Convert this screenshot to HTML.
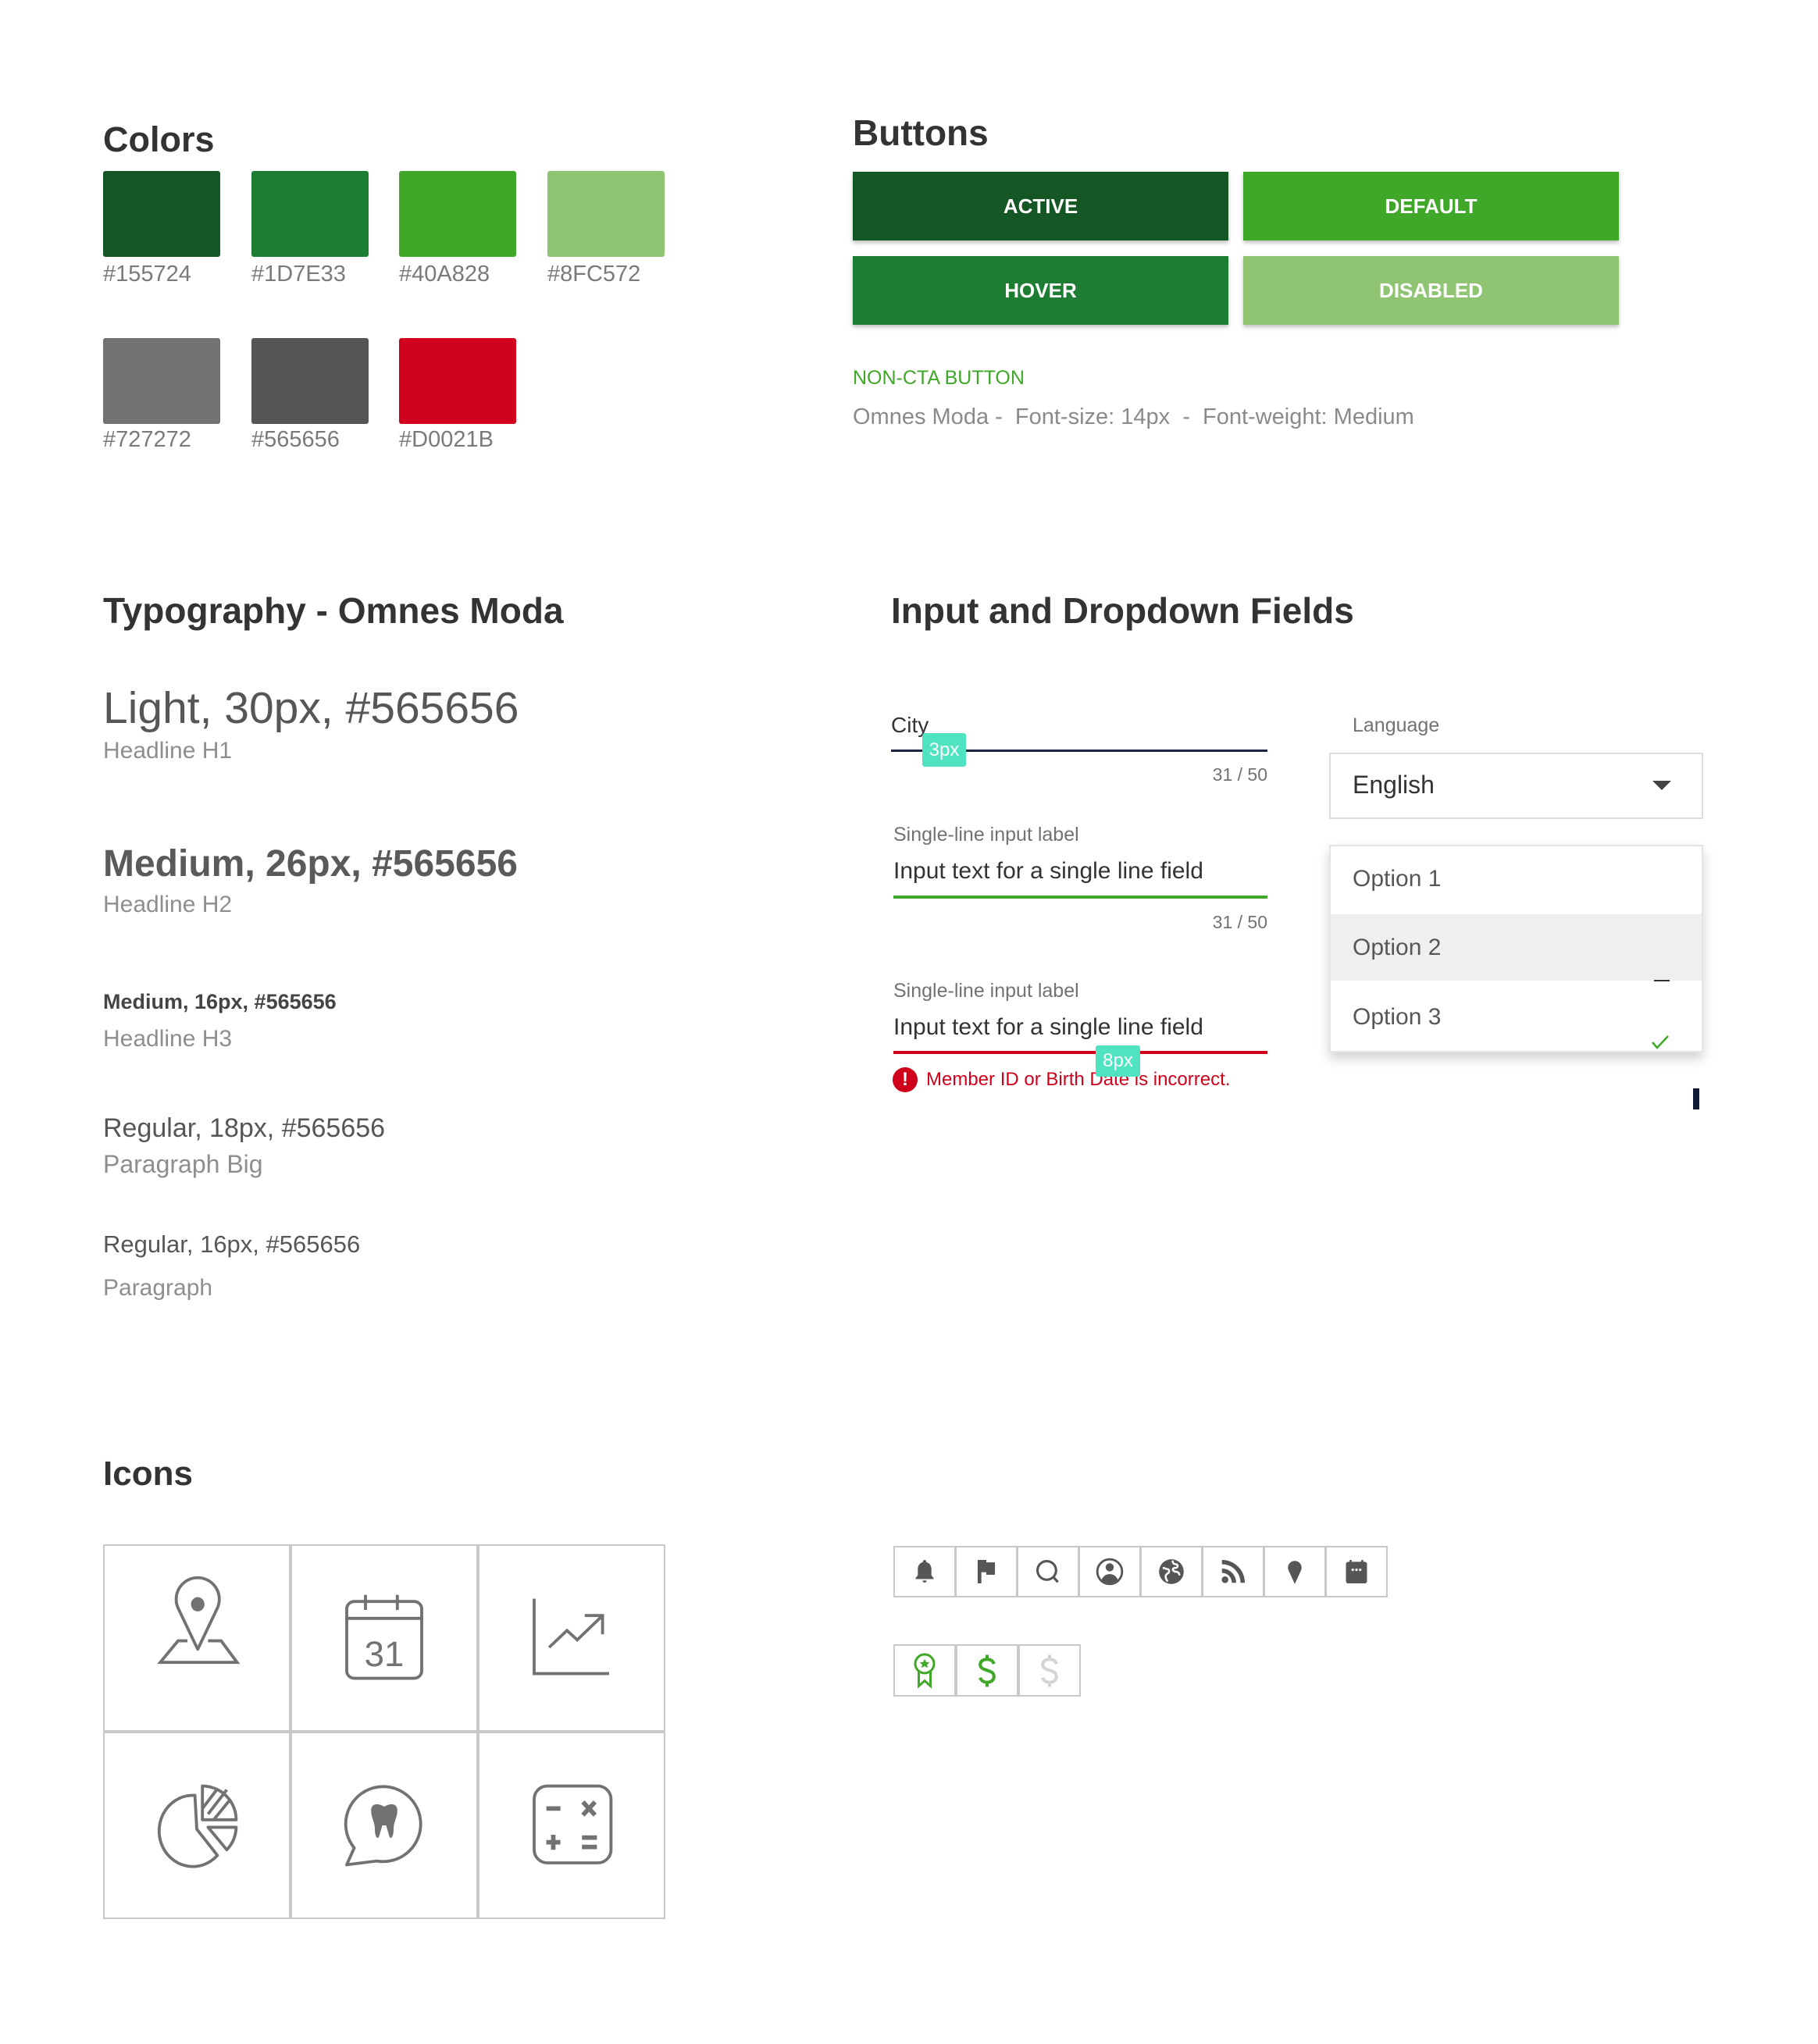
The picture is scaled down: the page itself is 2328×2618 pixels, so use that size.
<!DOCTYPE html>
<html><head><meta charset="utf-8">
<style>
*{margin:0;padding:0;box-sizing:border-box}
body{width:2328px;height:2618px;background:#fff;position:relative;overflow:hidden;font-family:"Liberation Sans",sans-serif;color:#565656}
.t{position:absolute;white-space:nowrap;line-height:1}
.h{font-weight:bold;color:#333;font-size:46px}
.sw{position:absolute;width:150px;height:110px;border-radius:3px}
.sl{font-size:29px;color:#7a7a7a}
.btn{position:absolute;width:481px;height:88px;color:#fff;font-weight:bold;font-size:26px;display:flex;align-items:center;justify-content:center;box-shadow:0 3px 5px rgba(0,0,0,.25)}
.cell{position:absolute;width:240px;height:240px;border:2px solid #c8c8c8}
.sc{position:absolute;width:80px;height:66px;border:2px solid #c8c8c8;display:flex;align-items:center;justify-content:center}
</style></head><body>

<div class="t h" style="left:132px;top:156px;font-size:45px">Colors</div>
<div class="sw" style="left:132px;top:219px;background:#155724"></div>
<div class="sw" style="left:322px;top:219px;background:#1D7E33"></div>
<div class="sw" style="left:511px;top:219px;background:#40A828"></div>
<div class="sw" style="left:701px;top:219px;background:#8FC572"></div>
<div class="t sl" style="left:132px;top:337px">#155724</div>
<div class="t sl" style="left:322px;top:337px">#1D7E33</div>
<div class="t sl" style="left:511px;top:337px">#40A828</div>
<div class="t sl" style="left:701px;top:337px">#8FC572</div>
<div class="sw" style="left:132px;top:433px;background:#727272"></div>
<div class="sw" style="left:322px;top:433px;background:#565656"></div>
<div class="sw" style="left:511px;top:433px;background:#D0021B"></div>
<div class="t sl" style="left:132px;top:549px">#727272</div>
<div class="t sl" style="left:322px;top:549px">#565656</div>
<div class="t sl" style="left:511px;top:549px">#D0021B</div>

<div class="t h" style="left:1092px;top:147px">Buttons</div>
<div class="btn" style="left:1092px;top:220px;background:#155724">ACTIVE</div>
<div class="btn" style="left:1592px;top:220px;background:#40A828">DEFAULT</div>
<div class="btn" style="left:1092px;top:328px;background:#1D7E33">HOVER</div>
<div class="btn" style="left:1592px;top:328px;background:#8FC572">DISABLED</div>
<div class="t" style="left:1092px;top:472px;font-size:25px;color:#40A828">NON-CTA BUTTON</div>
<div class="t" style="left:1092px;top:520px;font-size:29px;color:#8a8a8a">Omnes Moda -&nbsp; Font-size: 14px &nbsp;- &nbsp;Font-weight: Medium</div>

<div class="t h" style="left:132px;top:759px">Typography - Omnes Moda</div>
<div class="t" style="left:132px;top:879px;font-size:57px">Light, 30px, #565656</div>
<div class="t" style="left:132px;top:947px;font-size:30px;color:#8e8e8e">Headline H1</div>
<div class="t" style="left:132px;top:1083px;font-size:48px;font-weight:bold;color:#5a5a5a">Medium, 26px, #565656</div>
<div class="t" style="left:132px;top:1144px;font-size:30px;color:#8e8e8e">Headline H2</div>
<div class="t" style="left:132px;top:1270px;font-size:27px;font-weight:bold;color:#444">Medium, 16px, #565656</div>
<div class="t" style="left:132px;top:1316px;font-size:30px;color:#8e8e8e">Headline H3</div>
<div class="t" style="left:132px;top:1428px;font-size:34px">Regular, 18px, #565656</div>
<div class="t" style="left:132px;top:1475px;font-size:32px;color:#8e8e8e">Paragraph Big</div>
<div class="t" style="left:132px;top:1578px;font-size:31px">Regular, 16px, #565656</div>
<div class="t" style="left:132px;top:1635px;font-size:30px;color:#8e8e8e">Paragraph</div>

<div class="t h" style="left:1141px;top:759px">Input and Dropdown Fields</div>
<div class="t" style="left:1141px;top:915px;font-size:28px;color:#333">City</div>
<div style="position:absolute;left:1141px;top:960px;width:482px;height:3px;background:#1a2540"></div>
<div style="position:absolute;left:1181px;top:939px;width:56px;height:43px;background:#50e3c2;border-radius:3px;color:#fff;font-size:24px;line-height:43px;text-align:center">3px</div>
<div class="t" style="left:1500px;top:981px;width:123px;text-align:right;font-size:23px;color:#727272">31 / 50</div>
<div class="t" style="left:1144px;top:1057px;font-size:25px;color:#727272">Single-line input label</div>
<div class="t" style="left:1144px;top:1101px;font-size:30px;color:#333">Input text for a single line field</div>
<div style="position:absolute;left:1144px;top:1147px;width:479px;height:4px;background:#40A828"></div>
<div class="t" style="left:1500px;top:1170px;width:123px;text-align:right;font-size:23px;color:#727272">31 / 50</div>
<div class="t" style="left:1144px;top:1257px;font-size:25px;color:#727272">Single-line input label</div>
<div class="t" style="left:1144px;top:1301px;font-size:30px;color:#333">Input text for a single line field</div>
<div style="position:absolute;left:1144px;top:1346px;width:479px;height:4px;background:#D0021B"></div>
<div style="position:absolute;left:1143px;top:1367px;width:32px;height:32px;border-radius:50%;background:#D0021B;color:#fff;font-weight:bold;font-size:24px;line-height:32px;text-align:center">!</div>
<div class="t" style="left:1186px;top:1371px;font-size:24px;color:#D0021B">Member ID or Birth Date is incorrect.</div>
<div style="position:absolute;left:1403px;top:1339px;width:57px;height:40px;background:#50e3c2;border-radius:3px;color:#fff;font-size:24px;line-height:40px;text-align:center">8px</div>

<div class="t" style="left:1732px;top:917px;font-size:25px;color:#727272">Language</div>
<div style="position:absolute;left:1702px;top:964px;width:479px;height:85px;border:2px solid #ddd"></div>
<div class="t" style="left:1732px;top:989px;font-size:32px;color:#333">English</div>
<div style="position:absolute;left:2116px;top:1000px;width:0;height:0;border-left:12px solid transparent;border-right:12px solid transparent;border-top:12px solid #444"></div>
<div style="position:absolute;left:1702px;top:1082px;width:479px;height:266px;border:2px solid #e4e4e4;background:#fff;box-shadow:0 8px 14px rgba(0,0,0,.18)"></div>
<div style="position:absolute;left:1704px;top:1171px;width:475px;height:85px;background:#efefef"></div>
<div class="t" style="left:1732px;top:1111px;font-size:30px">Option 1</div>
<div class="t" style="left:1732px;top:1199px;font-size:30px">Option 2</div>
<div class="t" style="left:1732px;top:1288px;font-size:30px">Option 3</div>
<div style="position:absolute;left:2118px;top:1255px;width:20px;height:2px;background:#333"></div>
<svg style="position:absolute;left:2113px;top:1324px" width="26" height="22" viewBox="0 0 26 22"><path d="M3 11 L9 18 L23 3" stroke="#40A828" stroke-width="2.5" fill="none"/></svg>
<div style="position:absolute;left:2168px;top:1394px;width:8px;height:27px;background:#0e1a33"></div>

<div class="t h" style="left:132px;top:1866px;font-size:44px">Icons</div>

<div class="cell" style="left:132px;top:1978px"></div>
<div class="cell" style="left:372px;top:1978px"></div>
<div class="cell" style="left:612px;top:1978px"></div>
<div class="cell" style="left:132px;top:2218px"></div>
<div class="cell" style="left:372px;top:2218px"></div>
<div class="cell" style="left:612px;top:2218px"></div>

<svg style="position:absolute;left:132px;top:1978px" width="240" height="240" viewBox="0 0 100 100" fill="none" stroke="#727272" stroke-width="1.6">
<path d="M50.5 56 L40 34 A11.5 11.5 0 1 1 61 34 Z" stroke-linejoin="round"/>
<ellipse cx="50.5" cy="32" rx="3.6" ry="3.8" fill="#727272" stroke="none"/>
<path d="M45 51.5 L40 51.5 L30.5 63 L71.5 63 L63 51.5 L56 51.5"/>
</svg>
<svg style="position:absolute;left:372px;top:1978px" width="240" height="240" viewBox="0 0 100 100" fill="none" stroke="#727272" stroke-width="1.6">
<rect x="30" y="30.5" width="40" height="41" rx="4"/>
<path d="M30 39.5 H70 M40 27 V35 M57 27 V35"/>
<text x="50" y="65" font-family="Liberation Sans,sans-serif" font-size="19" fill="#727272" stroke="none" text-anchor="middle">31</text>
</svg>
<svg style="position:absolute;left:612px;top:1978px" width="240" height="240" viewBox="0 0 100 100" fill="none" stroke="#727272" stroke-width="1.6">
<path d="M30 29 V69 H70"/>
<path d="M38 55 L47.5 46 L53 51 L66 38.5 M57 38 H66.5 V48"/>
</svg>
<svg style="position:absolute;left:132px;top:2218px" width="240" height="240" viewBox="0 0 100 100" fill="none" stroke="#727272" stroke-width="1.6" stroke-linejoin="round">
<path d="M49 34 A18 19 0 1 0 61 66 L50 52 Z"/>
<path d="M53 29 A18 18 0 0 1 71 47 L53 47 Z"/>
<path d="M56 44 L66 31 M53 41 L61 30.5 M59 47 L68 36"/>
<path d="M56 51 L71 51 A18 18 0 0 1 66 63 Z"/>
</svg>
<svg style="position:absolute;left:372px;top:2218px" width="240" height="240" viewBox="0 0 100 100" fill="none" stroke="#727272" stroke-width="1.6">
<path d="M34 62 A20 20 0 1 1 46 69 L30 71 Z" stroke-linejoin="round"/>
<path d="M43 42 C43 38 47 38 50 40 C53 38 57 38 57 42 C57 46 55 48 55 52 C55 57 53 58 52.5 55 L51 50 H49 L47.5 55 C47 58 45 57 45 52 C45 48 43 46 43 42 Z" fill="#727272" stroke="none"/>
</svg>
<svg style="position:absolute;left:612px;top:2218px" width="240" height="240" viewBox="0 0 100 100" fill="none" stroke="#727272" stroke-width="1.6">
<rect x="30" y="29" width="41" height="41" rx="7"/>
<path d="M36.5 41 H44" stroke-width="2.4"/>
<path d="M56 37.5 L62.5 44.5 M62.5 37.5 L56 44.5" stroke-width="2.4"/>
<path d="M36.5 59 H44 M40.2 55 V63" stroke-width="2.4"/>
<path d="M55.5 56.5 H63.5 M55.5 61.5 H63.5" stroke-width="2.4"/>
</svg>

<div class="sc" style="left:1144px;top:1980px"><svg width="38" height="38" viewBox="0 0 24 24" fill="#565656"><path d="M12 2.5c-.8 0-1.3.6-1.3 1.3v.5C7.9 5 6.5 7.3 6.5 10v5l-1.8 2.2v.8h14.6v-.8L17.5 15v-5c0-2.7-1.4-5-4.2-5.7v-.5c0-.7-.5-1.3-1.3-1.3zM10.3 19.2a1.7 1.7 0 0 0 3.4 0z"/></svg></div>
<div class="sc" style="left:1223px;top:1980px"><svg width="38" height="38" viewBox="0 0 24 24" fill="#565656"><path d="M5 2.5h7v2h7v10h-7v-2H8v9H5z"/></svg></div>
<div class="sc" style="left:1302px;top:1980px"><svg width="38" height="38" viewBox="0 0 24 24" fill="none" stroke="#565656" stroke-width="2"><circle cx="11" cy="11" r="7.5"/><path d="M16.3 16.3 L20 20.5"/></svg></div>
<div class="sc" style="left:1381px;top:1980px"><svg width="38" height="38" viewBox="0 0 24 24"><circle cx="12" cy="12" r="10" fill="none" stroke="#565656" stroke-width="1.8"/><circle cx="12" cy="8.5" r="3.3" fill="#565656"/><path d="M5.5 18.5c1.3-3 3.6-4.5 6.5-4.5s5.2 1.5 6.5 4.5A9 9 0 0 1 5.5 18.5z" fill="#565656"/></svg></div>
<div class="sc" style="left:1460px;top:1980px"><svg width="38" height="38" viewBox="0 0 24 24"><circle cx="12" cy="12" r="10" fill="#565656"/><path d="M5 9c2 0 3 1 4 1s1.5 1.5 1 2.5-2 1-2.5 2.5 0 3 1.5 5M13 3c0 2 1 3 2.5 3s2 1.5 1 2.5-2 0-3 1 .5 2.5 2 2.5 3 1 3 3" stroke="#fff" stroke-width="1.6" fill="none"/></svg></div>
<div class="sc" style="left:1539px;top:1980px"><svg width="38" height="38" viewBox="0 0 24 24" fill="#565656"><circle cx="5.5" cy="18.5" r="2.7"/><path d="M3 9.5v3.5a8 8 0 0 1 8 8h3.5A11.5 11.5 0 0 0 3 9.5zM3 2.5V6a15 15 0 0 1 15 15h3.5A18.5 18.5 0 0 0 3 2.5z"/></svg></div>
<div class="sc" style="left:1618px;top:1980px"><svg width="38" height="38" viewBox="0 0 24 24" fill="#565656"><path d="M12 22L7.2 11.5A5.5 5.5 0 1 1 16.8 11.5z"/></svg></div>
<div class="sc" style="left:1697px;top:1980px"><svg width="38" height="38" viewBox="0 0 24 24" fill="#565656"><rect x="3.5" y="4" width="17" height="17.5" rx="1.8"/><rect x="6.5" y="2.5" width="1.6" height="3"/><rect x="15.9" y="2.5" width="1.6" height="3"/><circle cx="9" cy="10.5" r="1" fill="#fff"/><circle cx="12" cy="10.5" r="1" fill="#fff"/><circle cx="15" cy="10.5" r="1" fill="#fff"/></svg></div>

<div class="sc" style="left:1144px;top:2106px;height:67px"><svg width="36" height="48" viewBox="0 0 24 32" fill="none" stroke="#40A828" stroke-width="2"><circle cx="12" cy="10" r="8"/><path d="M7 16.5 V29 L12 24.5 L17 29 V16.5"/><path d="M12 5.8 L13.3 8.6 L16.2 8.8 L14 10.8 L14.7 13.6 L12 12 L9.3 13.6 L10 10.8 L7.8 8.8 L10.7 8.6 Z" fill="#40A828" stroke="none"/></svg></div>
<div class="sc" style="left:1224px;top:2106px;height:67px"><svg width="30" height="44" viewBox="0 0 20 30" fill="none" stroke="#40A828" stroke-width="2.8"><path d="M10 1 V5 M10 25 V29"/><path d="M16 9 C15 6 13 5 10 5 C6 5 4 7 4 9.5 C4 16 16 13 16 20 C16 23 13.5 25 10 25 C6.5 25 4.5 23 4 21"/></svg></div>
<div class="sc" style="left:1304px;top:2106px;height:67px"><svg width="30" height="44" viewBox="0 0 20 30" fill="none" stroke="#d4d4d4" stroke-width="2.8"><path d="M10 1 V5 M10 25 V29"/><path d="M16 9 C15 6 13 5 10 5 C6 5 4 7 4 9.5 C4 16 16 13 16 20 C16 23 13.5 25 10 25 C6.5 25 4.5 23 4 21"/></svg></div>

</body></html>
